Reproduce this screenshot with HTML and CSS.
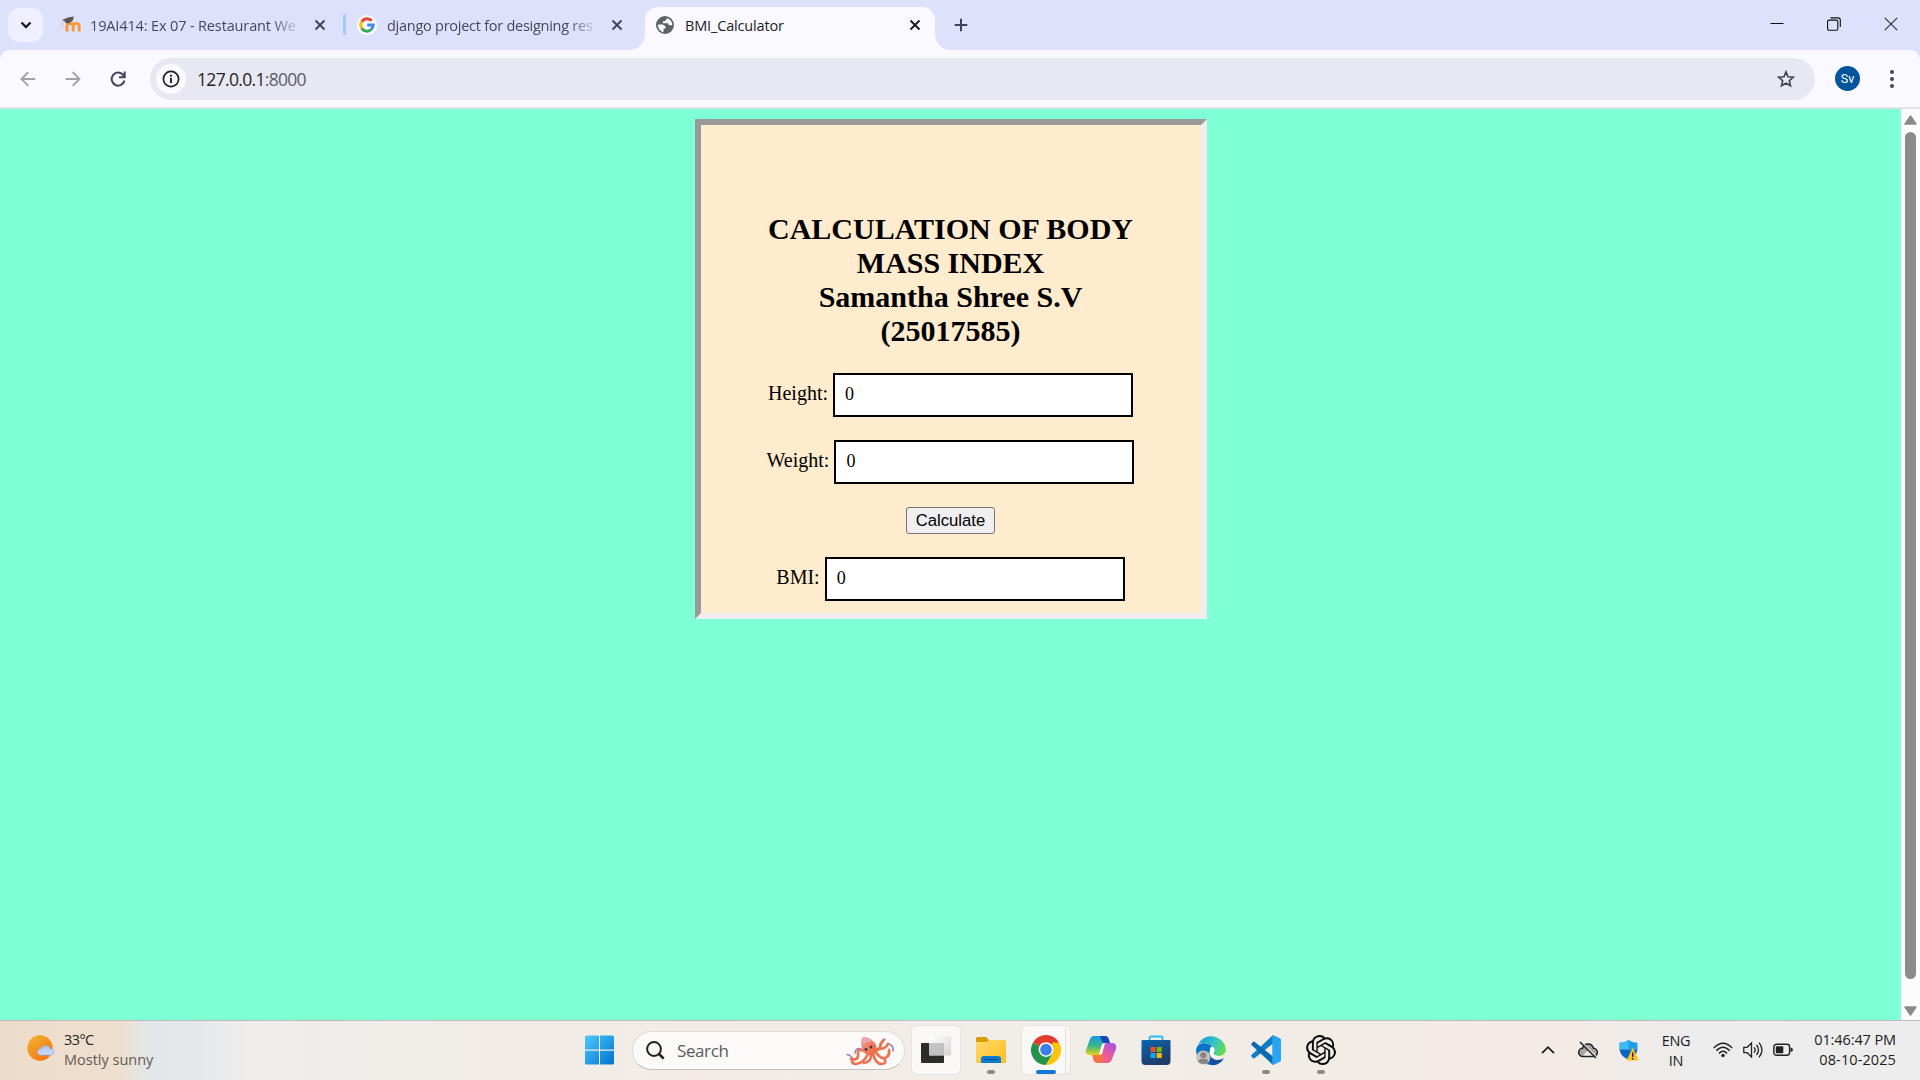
FILE: index.html
```html
<!DOCTYPE html>
<html lang="en">
<head>
<meta charset="utf-8">
<title>BMI_Calculator</title>
<link rel="stylesheet" href="styles.css">
</head>
<body>
<header class="tabstrip">
  <div class="tab-search"><svg width="12" height="8" viewBox="0 0 12 8"><path d="M1.5 1.5 6 6l4.500-4.500" fill="none" stroke="#1b1b1f" stroke-width="2.300"/></svg></div>
  <div class="tab tab-first">
    <svg class="fav" width="20" height="20" viewBox="0 0 20 20"><path d="M6 16.500V11q0-2.500 3.200-2.500T12.200 11v5.500M12.200 11q0-2.500 3-2.500t3 2.500v5.500" fill="none" stroke="#f7983a" stroke-width="2.900"/><path d="M1 5 7 2.500l6-1-1.500 4.500-4 2.500-3-.5-1-2z" fill="#5b5653"/><path d="M1.500 5.500V12" stroke="#dfb9a6" stroke-width="1"/></svg>
    <span class="title t1">19AI414: Ex 07 - Restaurant We</span>
    <svg class="x" width="12" height="12" viewBox="0 0 12 12"><path d="m1.500 1.500 9 9m0-9-9 9"/></svg>
  </div>
  <i class="sep"></i>
  <div class="tab tab-second">
    <svg class="fav" width="20" height="20" viewBox="0 0 20 20"><circle cx="10" cy="10" r="10" fill="#fff"/><g fill="none" stroke-width="3"><path d="M4.800 6.700A6.200 6.200 0 0 1 14.700 5.700" stroke="#ea4335"/><path d="M4.800 6.700a6.200 6.200 0 0 0 0 6.700" stroke="#fbbc05"/><path d="M4.800 13.400a6.200 6.200 0 0 0 9.200 1.300" stroke="#34a853"/><path d="M10.200 10h6a6.200 6.200 0 0 1-2.200 4.700" stroke="#4285f4"/></g></svg>
    <span class="title t2">django project for designing res</span>
    <svg class="x" width="12" height="12" viewBox="0 0 12 12"><path d="m1.500 1.500 9 9m0-9-9 9"/></svg>
  </div>
  <div class="tab active">
    <svg class="fav" width="18" height="18" viewBox="0 0 18 18"><circle cx="9" cy="9" r="9" fill="#5f6368"/><path d="M2 8.500h4.500l3 1.700v2L7.500 13v3.300A7.300 7.300 0 0 1 2 8.500zM10.500 2v1.500L8.700 5.300H7v2h5l1 2h3.300A7.300 7.300 0 0 0 10.500 2z" fill="#f9f9ff"/></svg>
    <span class="title t3">BMI_Calculator</span>
    <svg class="x" width="12" height="12" viewBox="0 0 12 12"><path d="m1.500 1.500 9 9m0-9-9 9"/></svg>
  </div>
  <svg class="plus" width="14" height="14" viewBox="0 0 14 14"><path d="M7 .700v12.600M.700 7h12.600" stroke="#3f4259" stroke-width="2"/></svg>
  <div class="winctl">
    <svg width="14" height="14" viewBox="0 0 14 14"><path d="M.500 6.500h13" stroke="#111"/></svg>
    <svg width="14" height="14" viewBox="0 0 14 14" fill="none" stroke="#111" stroke-width="1.100"><rect x=".600" y="3.100" width="10.200" height="10.200" rx="1.500"/><path d="M3.500.900h7.500a2.300 2.300 0 0 1 2.300 2.300V10"/></svg>
    <svg width="14" height="14" viewBox="0 0 14 14"><path d="m.800.800 12.400 12.400m0-12.400L.800 13.200" stroke="#33343c" stroke-width="1.200"/></svg>
  </div>
</header>
<nav class="toolbar">
  <div class="navs">
    <svg width="16" height="16" viewBox="0 0 16 16" fill="none" stroke="#a2a3ab" stroke-width="1.900"><path d="M15.200 8H2M8.300 1.200 1.500 8l6.800 6.800"/></svg>
    <svg width="16" height="16" viewBox="0 0 16 16" fill="none" stroke="#a2a3ab" stroke-width="1.900"><path d="M.800 8H14M7.700 1.200 14.500 8l-6.800 6.800"/></svg>
    <svg width="16" height="16" viewBox="0 0 16 16" fill="none" stroke="#42455b" stroke-width="2"><path d="M14.500 9.500A6.500 6.500 0 1 1 13.200 4L14.700 6M14.700.500v5.700H9"/></svg>
  </div>
  <div class="omnibox">
    <span class="info"><svg width="18" height="18" viewBox="0 0 18 18"><circle cx="9" cy="9" r="7.600" fill="none" stroke="#1f1f25" stroke-width="1.700"/><path d="M9 8v5M9 4.800v1.900" stroke="#1f1f25" stroke-width="1.900"/></svg></span>
    <span class="url">127.0.0.1<span>:8000</span></span>
    <svg class="star" width="18" height="18" viewBox="0 0 18 18"><path d="m9 1.900 2 4.900 5.300.4-4 3.500 1.200 5.100L9 13.100l-4.500 2.700 1.200-5.100-4-3.500 5.300-.4z" fill="none" stroke="#42444f" stroke-width="1.600"/></svg>
  </div>
  <span class="avatar">Sv</span>
  <svg class="dots" width="4" height="18" viewBox="0 0 4 18" fill="#42455b"><circle cx="2" cy="2" r="2"/><circle cx="2" cy="9" r="2"/><circle cx="2" cy="16" r="2"/></svg>
</nav>
<div class="viewport">
  <main class="page">
    <form class="card">
      <h1>CALCULATION OF BODY<br>MASS INDEX<br>Samantha Shree S.V<br>(25017585)</h1>
      <label>Height: <input type="text" value="0"></label>
      <label>Weight: <input type="text" value="0"></label>
      <button type="button">Calculate</button>
      <label>BMI: <input type="text" value="0"></label>
    </form>
  </main>
  <aside class="scroll">
    <svg width="13" height="10" viewBox="0 0 13 10"><path d="M6.500 1 12 9H1z" fill="#8b8b8b" stroke="#8b8b8b" stroke-width="1.500" stroke-linejoin="round"/></svg>
    <i class="thumb"></i>
    <svg width="13" height="10" viewBox="0 0 13 10"><path d="M6.500 9 12 1H1z" fill="#8b8b8b" stroke="#8b8b8b" stroke-width="1.500" stroke-linejoin="round"/></svg>
  </aside>
</div>
<footer class="taskbar">
  <div class="weather">
    <svg width="28" height="28" viewBox="0 0 28 28"><defs><linearGradient id="sun" x1="0" y1="0" x2=".7" y2="1"><stop offset="0" stop-color="#efb832"/><stop offset="1" stop-color="#f67314"/></linearGradient><linearGradient id="cl" x1="0" y1="0" x2="0" y2="1"><stop offset="0" stop-color="#a9c4f1"/><stop offset="1" stop-color="#cddcfa"/></linearGradient></defs><circle cx="13" cy="14" r="12.700" fill="url(#sun)"/><path d="M13.500 21a3 3 0 0 1 .2-6 5.300 5.300 0 0 1 9.800 0 3 3 0 0 1 1 6z" fill="url(#cl)" stroke="#8fb0e8" stroke-width=".8"/></svg>
    <div><p class="temp">33°C</p><p class="sky">Mostly sunny</p></div>
  </div>
  <div class="apps">
    <div class="app"><svg width="30" height="30" viewBox="0 0 30 30"><defs><linearGradient id="win" x1="0" y1="0" x2="1" y2="1"><stop offset="0" stop-color="#4cc9fb"/><stop offset="1" stop-color="#0072cf"/></linearGradient></defs><path d="M1.500 .500H14v14H0V2A1.500 1.500 0 0 1 1.500 .500zM15 .500h12.500A1.500 1.500 0 0 1 29 2v12.500H15zM0 15.700h14v13.800H1.500A1.500 1.500 0 0 1 0 28zM15 15.700h14V28a1.500 1.500 0 0 1-1.500 1.500H15z" fill="url(#win)"/></svg></div>
    <div class="search">
      <svg width="19" height="19" viewBox="0 0 19 19" fill="none" stroke="#222"><circle cx="8" cy="8" r="6.900" stroke-width="2"/><path d="m13 13 4.700 4.700" stroke-width="2.600"/></svg>
      <span>Search</span>
      <svg width="50" height="30" viewBox="0 0 50 30" fill="none" stroke-linecap="round"><defs><linearGradient id="oc" x1="0" y1="0" x2="1" y2="1"><stop offset="0" stop-color="#f29a95"/><stop offset="1" stop-color="#ee6437"/></linearGradient></defs><g stroke="#9b83c6" stroke-width="1.600"><path d="M2 18.500q4 .5 6 5M35 8q2-4 5-5M44 8q5 2 4 7M16 13q-5-2-6 4"/></g><g stroke="#ed7350" stroke-width="2.700"><path d="M21 16q-9-5-8 2 1 7-7 5M23 18q-4 9-12 10-4 0-4-3M26 17q1 9-7 10M28 17q2 11 9 11 5-1 3-4M30 15q6 10 12 6 3-3 2-7M29 13q5 3 6-2t4-7M31 13q9 1 12-5"/></g><path d="M18 1q6 0 11 5 4 4 2 9-2 4-7 4-6-1-7-7-2-6 1-11z" fill="url(#oc)"/><path d="M18 1q5 0 9 4l-10 3q-1-5 1-7z" fill="#eba7ad"/><circle cx="21" cy="13.500" r="1.400" fill="#403956"/><circle cx="26" cy="11" r="1.400" fill="#403956"/></svg>
    </div>
    <div class="app lit"><svg width="30" height="30" viewBox="0 0 30 30"><defs><linearGradient id="tv" x1="0" y1="0" x2="1" y2="1"><stop offset="0" stop-color="#fff"/><stop offset="1" stop-color="#d5d5d5"/></linearGradient></defs><rect y="8" width="23" height="20" rx="1" fill="#2c2c2b"/><rect x="8" y="1" width="22" height="19.500" rx="1" fill="url(#tv)"/><path d="M8 8h15v12.500H8z" fill="#b4b4b4" opacity=".75"/></svg></div>
    <div class="app"><svg width="30" height="30" viewBox="0 0 30 30"><defs><linearGradient id="fo" x1="0" y1="0" x2="1" y2="1"><stop offset="0" stop-color="#ffdc67"/><stop offset="1" stop-color="#fcbc24"/></linearGradient></defs><path d="M0 3.500A1.500 1.500 0 0 1 1.500 2H10l3 3v5H0z" fill="#dc9c08"/><path d="M0 7h10l4-2h15a1 1 0 0 1 1 1v22H1a1 1 0 0 1-1-1z" fill="url(#fo)"/><path d="M5 28v-4a3 3 0 0 1 3-3h14a3 3 0 0 1 3 3v4z" fill="#087bd2"/><path d="M8.500 24.500h13" stroke="#095091" stroke-width="1.200"/></svg><i class="run"></i></div>
    <div class="app lit stacked"><svg width="30" height="30" viewBox="0 0 30 30"><path d="M15 15 2 7.500A15 15 0 0 1 28 7.500z" fill="#e33b2e"/><path d="M2 7.500a15 15 0 0 0 13 22.500l6.500-11.200L15 15z" fill="#24944b"/><path d="M28 7.500A15 15 0 0 1 15 30l6.500-11.300L21 7.500z" fill="#fdc40e"/><circle cx="15" cy="14.600" r="7.400" fill="#fff"/><circle cx="15" cy="14.600" r="5.800" fill="#397ee9"/></svg><i class="run on"></i></div>
    <div class="app"><svg width="30" height="30" viewBox="0 0 30 30"><defs><linearGradient id="c1" x1="0" y1="0" x2="0" y2="1"><stop offset="0" stop-color="#169be9"/><stop offset=".5" stop-color="#37b58c"/><stop offset="1" stop-color="#e8d313"/></linearGradient><linearGradient id="c2" x1="1" y1="0" x2="0" y2="1"><stop offset="0" stop-color="#9b55ec"/><stop offset=".5" stop-color="#ec5a9a"/><stop offset="1" stop-color="#ff7544"/></linearGradient></defs><path d="M8 1h11q3 0 4 4l1 3h-3q-3 0-4 4l-2 6q-1 2-3 2H3q-4-1-3-5L4 4q1-3 4-3z" fill="url(#c1)"/><path d="M14 1h5q3 0 4 4l1 3h-5q-3 0-4-4z" fill="#1746bd"/><path d="M22 8h5q4 1 3 6l-4 10q-1 4-5 4H12q-4 0-5-5l-1-3h5q3 0 4-3l2-6q1-3 5-3z" fill="url(#c2)"/><path d="M7 20h6q2 0 3-2l1 2-2 6q-1 2-3 2-4 0-5-5z" fill="#f7763b"/><path d="m16 9-3 11 3-1 3-11z" fill="#fff"/></svg></div>
    <div class="app"><svg width="30" height="30" viewBox="0 0 30 30"><defs><linearGradient id="st" x1="0" y1="0" x2=".5" y2="1"><stop offset="0" stop-color="#0867b2"/><stop offset="1" stop-color="#203b64"/></linearGradient></defs><path d="M8.500 7V3a1.500 1.500 0 0 1 1.500-1.500h10A1.500 1.500 0 0 1 21.500 3v4" fill="none" stroke="#2bbcf0" stroke-width="1.900"/><path d="M.500 6A1 1 0 0 1 1.500 5h27a1 1 0 0 1 1 1v20a4 4 0 0 1-4 4h-21a4 4 0 0 1-4-4z" fill="url(#st)"/><path d="M9.500 12h5v5h-5z" fill="#f25022"/><path d="M15.700 12h5v5h-5z" fill="#7fba00"/><path d="M9.500 18h5v5h-5z" fill="#13a8ee"/><path d="M15.700 18h5v5h-5z" fill="#ffb900"/></svg></div>
    <div class="app"><svg width="30" height="30" viewBox="0 0 30 30"><defs><linearGradient id="e1" x1="0" y1=".3" x2="1" y2=".6"><stop offset="0" stop-color="#1597dc"/><stop offset=".55" stop-color="#35c5c6"/><stop offset="1" stop-color="#68dc4a"/></linearGradient></defs><path d="M2 9A15 15 0 0 1 30 14q0 6-7 7-6 0-6-3 2-1 1.500-4Q17 10 10 8 5 7 2 9z" fill="url(#e1)"/><path d="M0 15q1-7 8-7 8 1 9 5-6 3-2 9 5 5 12 3-5 6-12 5A15 15 0 0 1 0 15z" fill="#0b74c6"/><path d="M12 17q2 8 9 8 4 0 7-2-5 8-13 7-5-5-3-13z" fill="#1350a0"/><path d="M14 15q0-4 3-3 3 3 0 6 1 3 6 3-9 3-9-6z" fill="#fff"/><circle cx="7.300" cy="22.500" r="7" fill="#c4c2c0"/><circle cx="7.300" cy="20.300" r="3" fill="#85827f"/><path d="M2.500 27q0-3 2.500-3h4.600q2.500 0 2.500 3-4.600 4-9.600 0z" fill="#85827f"/></svg></div>
    <div class="app"><svg width="30" height="30" viewBox="0 0 30 30"><path d="M22 0v8.500L3.500 23.200Q2.700 23.700 2 23L.500 21.500q-.7-.8 0-1.500z" fill="#0f7dc7"/><path d="M22 30v-8.500L3.500 6.800Q2.700 6.300 2 7L.500 8.500q-.7.8 0 1.500z" fill="#0a6bb3"/><path d="m22 0 7 3.300q1 .5 1 1.700v20q0 1.200-1 1.700L22 30q-.7-.5-.7-2V2q0-1.500.7-2z" fill="#28a4f1"/></svg><i class="run"></i></div>
    <div class="app"><svg width="30" height="30" viewBox="0 0 24 24"><path fill="#0a0a0a" d="M22.282 9.821a5.985 5.985 0 0 0-.516-4.910 6.046 6.046 0 0 0-6.510-2.900A6.065 6.065 0 0 0 4.981 4.180a5.985 5.985 0 0 0-3.998 2.900 6.046 6.046 0 0 0 .743 7.097 5.980 5.980 0 0 0 .510 4.911 6.051 6.051 0 0 0 6.515 2.900A5.985 5.985 0 0 0 13.260 24a6.056 6.056 0 0 0 5.772-4.206 5.990 5.990 0 0 0 3.997-2.900 6.056 6.056 0 0 0-.747-7.073zM13.260 22.430a4.476 4.476 0 0 1-2.876-1.040l.141-.081 4.779-2.758a.795.795 0 0 0 .392-.681v-6.737l2.020 1.168a.071.071 0 0 1 .038.052v5.583a4.504 4.504 0 0 1-4.494 4.494zM3.600 18.304a4.470 4.470 0 0 1-.535-3.014l.142.085 4.783 2.759a.771.771 0 0 0 .780 0l5.843-3.369v2.332a.080.080 0 0 1-.033.062L9.740 19.950a4.500 4.500 0 0 1-6.140-1.646zM2.340 7.896a4.485 4.485 0 0 1 2.366-1.973V11.600a.766.766 0 0 0 .388.676l5.815 3.355-2.020 1.168a.076.076 0 0 1-.071 0l-4.830-2.786A4.504 4.504 0 0 1 2.340 7.872zm16.597 3.855l-5.833-3.387L15.119 7.200a.076.076 0 0 1 .071 0l4.830 2.791a4.494 4.494 0 0 1-.676 8.105v-5.678a.790.790 0 0 0-.407-.667zm2.010-3.023l-.141-.085-4.774-2.782a.776.776 0 0 0-.785 0L9.409 9.230V6.897a.066.066 0 0 1 .028-.061l4.830-2.787a4.500 4.500 0 0 1 6.680 4.660zm-12.640 4.135l-2.020-1.164a.080.080 0 0 1-.038-.057V6.075a4.500 4.500 0 0 1 7.375-3.453l-.142.080L8.704 5.460a.795.795 0 0 0-.393.681zm1.097-2.365l2.602-1.500 2.607 1.500v2.999l-2.597 1.500-2.607-1.500z"/></svg><i class="run"></i></div>
  </div>
  <div class="tray">
    <svg class="chev" width="14" height="8" viewBox="0 0 14 8"><path d="M1 7.200 7 1.200l6 6" fill="none" stroke="#1a1a1a" stroke-width="1.700"/></svg>
    <svg class="cloud" width="20" height="18" viewBox="0 0 20 18"><path d="M5 15.500a4 4 0 0 1-.5-8.200 5.700 5.700 0 0 1 11 0 4.100 4.100 0 0 1-.5 8.200z" fill="#a9a6a4" stroke="#222" stroke-width="1.500"/><path d="M5 14.500 10 9l7 4-2 1.500z" fill="#eeeceb"/><path d="m3 .500 16 16" stroke="#eeeceb" stroke-width="1.500"/><path d="m2 1 16 16" stroke="#222" stroke-width="1.600"/></svg>
    <svg class="shield" width="20" height="21" viewBox="0 0 20 21"><path d="M9.500 0q3.500 2.500 9 2.800V9.500H.500V2.800Q6 2.500 9.500 0z" fill="#1d9ee9"/><path d="M9.500 0v9.500h-9V2.800Q6 2.500 9.500 0z" fill="#42b8f5"/><path d="M.500 9.500h18q-1 7-9 10-8-3-9-10z" fill="#0b65c2"/><path d="M13.700 7.500 20 20.500H7.500z" fill="#fbc02a"/><path d="M13.700 12.500v4.500M13.700 18v1.500" stroke="#222" stroke-width="1.400"/></svg>
    <div class="lang">ENG<br>IN</div>
    <svg class="wifi" width="20" height="16" viewBox="0 0 20 16" fill="none" stroke="#222" stroke-width="1.400"><path d="M.800 6q9.200-9.500 18.400 0M3.300 8.800q6.700-7 13.400 0M5.900 11.400q4.100-4.400 8.200 0"/><circle cx="10" cy="13.500" r="1.700" fill="#222" stroke="none"/></svg>
    <svg class="vol" width="20" height="18" viewBox="0 0 20 18" fill="none" stroke="#222" stroke-width="1.300"><path d="M.800 6.300h3.400L8.500 2v14l-4.300-4.300H.800zM11 6.300q2.300 2.700 0 5.400M13.500 4q4 5 0 10M16 1.700q6 7.300 0 14.600"/></svg>
    <svg class="bat" width="20" height="14" viewBox="0 0 20 14"><rect x=".800" y="1.300" width="15.800" height="11" rx="2.700" fill="none" stroke="#222" stroke-width="1.400"/><rect x="2.800" y="3.300" width="7.500" height="7" rx="1" fill="#222"/><path d="M17.500 4.500q2.500.5 2.500 2.300t-2.500 2.300z" fill="#222"/></svg>
    <div class="clock"><span class="time">01:46:47 PM</span><br><span class="date">08-10-2025</span></div>
  </div>
</footer>
</body>
</html>
```
FILE: styles.css
```css
* { box-sizing: border-box; }
body {
  margin: 0;
  width: 1920px;
  height: 1080px;
  overflow: hidden;
  display: flex;
  flex-direction: column;
  font-family: "Open Sans", "Noto Sans", sans-serif;
  background: #dde1fb;
}
svg { display: block; flex: none; overflow: visible; }
p { margin: 0; }

/* Tab strip */
.tabstrip { height: 50px; display: flex; padding-left: 8px; flex: none; }
.tab-search {
  width: 35px; height: 34px; margin-top: 8px;
  border-radius: 11px; background: #eef0ff;
  display: flex; align-items: center; justify-content: center;
}
.tab { display: flex; align-items: center; height: 50px; color: #45485c; }
.tab-first { width: 300px; padding-left: 18px; }
.tab-second { width: 299px; padding-left: 11px; }
.title {
  font-size: 14.500px; line-height: 20px; height: 20px; padding-top: 1px;
  white-space: nowrap; margin-left: 10px;
}
.t1, .t2 {
  width: 210px;
  -webkit-mask-image: linear-gradient(90deg, #000 86%, transparent 101%);
  mask-image: linear-gradient(90deg, #000 86%, transparent 101%);
}
.t1 { letter-spacing: -.14px; margin-left: 9px; margin-right: 14px; }
.t2 { letter-spacing: -.26px; margin-right: 14px; }
.t3 { letter-spacing: -.16px; margin-left: 11px; }
.x { stroke: #3f4259; stroke-width: 1.900; }
.sep { width: 3px; height: 21px; margin-top: 14px; background: #a9c7ff; border-radius: 1.500px; }
.active {
  position: relative;
  width: 290px; height: 43px; margin-top: 7px; padding: 0 14px 7px 11px;
  background: #f9f9ff; border-radius: 13px 13px 0 0; color: #1b1b1f;
}
.active .x { margin-left: auto; stroke: #1b1b1f; }
.active::before, .active::after {
  content: ""; position: absolute; bottom: 0; width: 15px; height: 15px;
}
.active::before { left: -15px; background: radial-gradient(circle at 0 0, transparent 14.500px, #f9f9ff 15px); }
.active::after { right: -15px; background: radial-gradient(circle at 100% 0, transparent 14.500px, #f9f9ff 15px); }
.plus { margin: 18px 0 0 19px; }
.winctl { margin: 17px 22px 0 auto; display: flex; gap: 43px; }

/* Address bar */
.toolbar {
  height: 59px; flex: none; display: flex; align-items: flex-start;
  background: #f9f9ff; border-bottom: 2px solid #e2e2ee;
  border-radius: 10px 10px 0 0; padding: 8px 26px 0 20px;
}
.navs { display: flex; gap: 29px; width: 130px; padding-top: 13px; }
.omnibox {
  width: 1665px; height: 42px; border-radius: 21px; background: #e7e8f1;
  display: flex; align-items: center; padding: 0 20px 0 6px;
}
.info {
  width: 30px; height: 30px; border-radius: 50%; background: #f9f9ff;
  display: flex; align-items: center; justify-content: center;
}
.url { margin-left: 11px; font-size: 17.500px; letter-spacing: -.68px; color: #1f1f25; }
.url span { color: #5a5c69; }
.star { margin-left: auto; }
.avatar {
  width: 25px; height: 25px; margin: 8px 0 0 20px; border-radius: 50%;
  background: #02559c; color: #fff; font: 12.500px/25px Roboto, sans-serif; text-align: center;
}
.dots { margin: 12px 0 0 auto; }

/* Page */
.viewport { flex: 1; display: flex; min-height: 0; }
.page {
  flex: 1; background: #7fffd4; padding-top: 10px;
  font-family: "Liberation Serif", serif; font-size: 20px; color: #000;
}
.card {
  width: 512px; height: 500px; margin: 0 auto; padding-top: 87px;
  background: #ffebcd; border: 6px solid; border-color: #9a9a9a #eee #eee #9a9a9a;
  display: flex; flex-direction: column; align-items: center; gap: 23px;
}
.card h1 { margin: 0 0 2px; font-size: 30px; line-height: 34px; text-align: center; }
.card label { display: flex; align-items: baseline; gap: 5px; height: 44px; }
.card input {
  width: 300px; height: 44px; padding: 0 10px 2px; border: 2px solid #000;
  background: #fff; color: #000; font: 18px "Liberation Serif", serif;
}
.card button {
  width: 89px; height: 27px; padding: 0; border: 1px solid #767676; border-radius: 3px;
  background: #efefef; color: #000; font: 16.670px "Liberation Sans", sans-serif;
}
.scroll {
  width: 19px; background: #fcfcfc; display: flex; flex-direction: column;
  align-items: center; padding: 6px 0 4px;
}
.thumb { width: 11px; height: 847px; margin: 7px 0 auto; border-radius: 6px; background: #8b8b8b; }

/* Taskbar */
.taskbar {
  height: 60px; flex: none; display: flex; border-top: 1px solid #bfbab8;
  background: linear-gradient(90deg, #ecdccb 0, #eedfce 120px, #e2e7eb 150px, #e4e8eb 195px, #f0edea 250px, #f3ece6 700px, #f1ede8 1050px, #f3ebe5 1560px, #ececec 1700px, #eeeded 100%);
}
.weather { width: 576px; padding: 9px 0 0 27px; display: flex; gap: 9px; }
.weather svg { margin-top: 4px; }
.weather p { font-size: 14.500px; line-height: 20px; }
.temp { color: #222; letter-spacing: -.6px; }
.sky { color: #605a56; letter-spacing: 0; }
.apps { display: flex; gap: 7px; padding-top: 5px; }
.app {
  width: 48px; height: 48px; border-radius: 5px; padding: 9px 9px 0;
  display: flex; flex-direction: column; align-items: center; gap: 5px;
}
.lit { background: #faf8f6; box-shadow: 0 0 0 1px #e9e4e0; }
.stacked { background: linear-gradient(90deg, #faf8f6 43px, #e5e0dc 43px, #e5e0dc 44px, #f8f5f2 44px); }
.run { width: 8px; height: 4px; border-radius: 2px; background: #8c8885; flex: none; }
.run.on { width: 20px; background: #0f78d4; }
.search {
  width: 273px; height: 39px; margin: 5px 0 0 1px; border-radius: 20px;
  background: #fbfaf9; border: 1px solid #e0dcd9; border-bottom-color: #c3bfbd;
  display: flex; align-items: center; padding: 0 9px 0 13px;
}
.search span { margin: 0 auto 0 12px; font-size: 17px; letter-spacing: -.4px; color: #5b5b5b; }
.tray { margin-left: auto; display: flex; align-items: flex-start; color: #1c1c1c; font-size: 14.500px; line-height: 20px; padding-right: 24px; }
.chev { margin: 25px 23px 0 0; }
.cloud { margin: 20px 21px 0 0; }
.shield { margin: 19px 17px 0 0; }
.lang { width: 40px; margin: 10px 17px 0 0; text-align: center; letter-spacing: -.3px; }
.wifi { margin: 21px 10px 0 0; }
.vol { margin: 20px 10px 0 0; }
.bat { margin: 22px 0 0; }
.clock { width: 103px; padding-top: 9px; text-align: right; white-space: nowrap; }
.time { letter-spacing: -.1px; }
.date { letter-spacing: .1px; }
```
